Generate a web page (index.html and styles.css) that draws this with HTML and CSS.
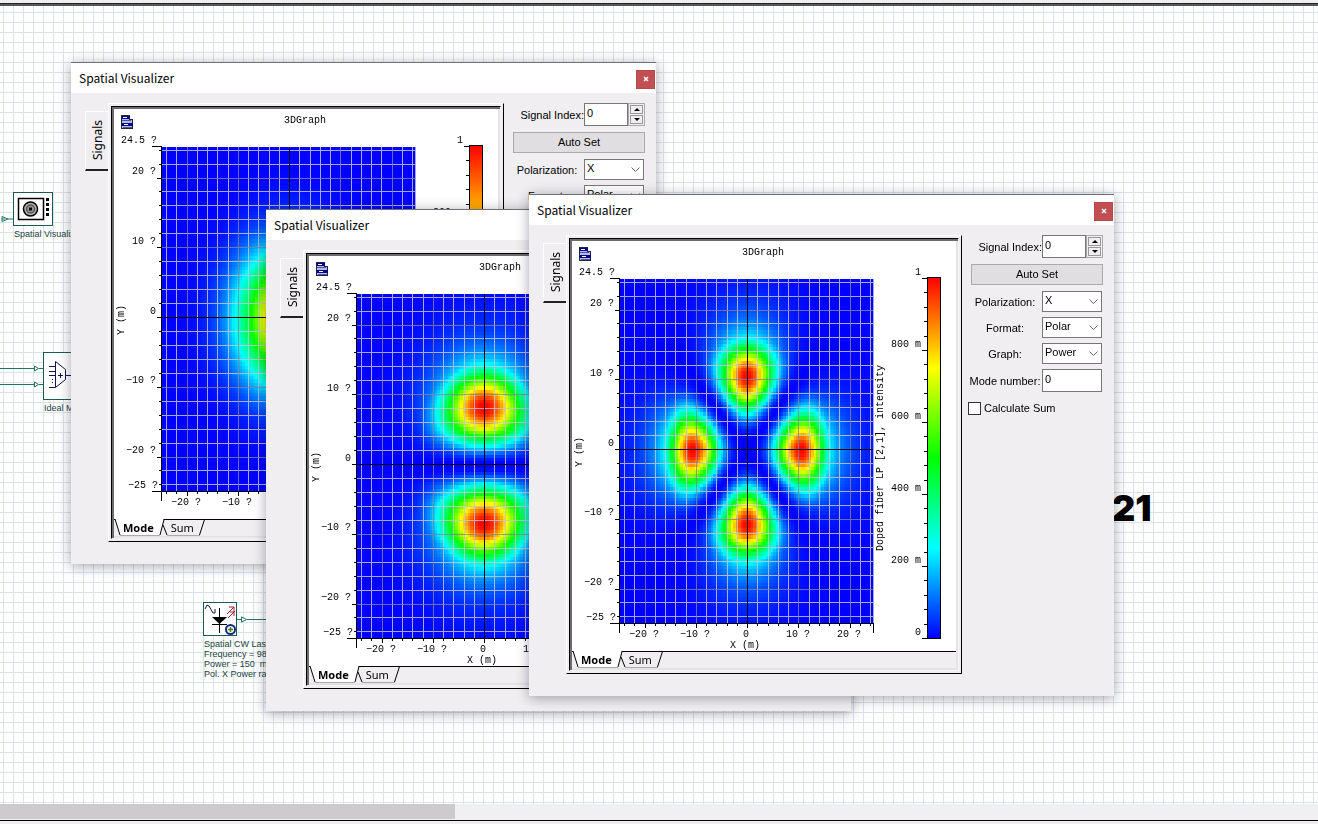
FILE: index.html
```html
<!DOCTYPE html>
<html lang="en">
<head>
<meta charset="utf-8">
<title>Spatial Visualizer</title>
<link rel="stylesheet" href="styles.css">
</head>
<body>
<main class="workspace">
  <div class="top-rule"></div>
  <section class="sheet">
    <svg class="schematic" xmlns="http://www.w3.org/2000/svg" aria-label="Schematic">
      <g class="wire">
        <path d="M2 215h3M2 212.500v5l6-2.500zM8 215h5" />
        <path d="M0 364.500h35M0 380.500h35M34.500 362v5l4-2.500zM34.500 378v5l4-2.500zM39 364.500h4M39 380.500h4" />
        <path d="M237 615.500h4M241.500 613v5l5-2.500zM247 615.500h40" />
      </g>
      <g class="node">
        <rect x="13.500" y="188.500" width="39" height="33" />
        <rect x="43.500" y="348.500" width="47" height="47" />
        <rect x="203.500" y="598.500" width="33" height="33" />
      </g>
      <g fill="none" stroke="#000" stroke-width="1.500">
        <rect x="18.500" y="194.500" width="25" height="21" />
        <circle cx="30.500" cy="205" r="7" fill="#b0b0b0" />
        <circle cx="30.500" cy="205" r="4" fill="#999" stroke="#555" />
      </g>
      <path d="M29 203.500h3v3h-3zM46 194h3v3h-3zM46 199h3v3h-3zM46 204h3v3h-3zM46 209h3v3h-3z" />
      <path class="ink" d="M49 362.500h6M49 367.500h6M49 371.500h6M49 383.500h6M52.500 375v1M52.500 378v1M55.500 357.500v26l10-8v-10zM66 371.500h8M58 371.500h5M60.500 369v5" />
      <path class="ink" d="M205 605l2-4 2 1 4 7 2 0 0-4" />
      <path d="M219.500 604v25M212 620.500h15" fill="none" stroke="#000" />
      <path d="M212 613h15l-7.500 7z" />
      <path d="M227 610l7-7M229 603h5v5M228 614l7-7M230 608h4v4" fill="none" stroke="#a02030" />
      <circle cx="230.500" cy="625.500" r="4.500" fill="#fff" stroke="#102a78" stroke-width="2" />
      <path d="M230.500 623v5M228 625.500h5" stroke="#4a7a20" stroke-width="1.500" />
      <g class="node-label">
        <text x="14" y="233">Spatial Visualizer</text>
        <text x="44" y="407">Ideal Mux</text>
        <text x="204" y="643">Spatial CW Laser</text>
        <text x="204" y="653">Frequency = 980 nm</text>
        <text x="204" y="663" xml:space="preserve">Power = 150  mW</text>
        <text x="204" y="673">Pol. X Power ratio</text>
      </g>
      <text class="caption" x="1112" y="517">21</text>
    </svg>
  </section>
  <div class="scrollbar"><div class="thumb"></div></div>
</main>

<template id="visualizer">
  <header class="titlebar">
    <h2>Spatial Visualizer</h2>
    <button class="close" type="button" aria-label="Close"><svg viewBox="0 0 6 6" width="6" height="6"><path d="M1 1l4 4M5 1L1 5" /></svg></button>
  </header>
  <div class="body">
    <button class="side-tab" type="button">Signals</button>
    <div class="frame">
      <div class="view">
        <div class="chart">
          <canvas width="101" height="101"></canvas>
          <svg class="axes" viewBox="0 0 384 410" width="384" height="410" xmlns="http://www.w3.org/2000/svg">
            <g class="doc-icon">
              <path fill="#b8b8e8" stroke="#222244" d="M7.500 6.500h8v4h3v9h-11z" />
              <path fill="#000090" d="M8 7h8v3H8zM8 14h11v3H8z" />
              <path fill="#fff" d="M9 8h4v1H9zM10 15h4v1h-4z" />
              <path fill="#555588" d="M8 11h9v1H8zM9 18h9v1H9z" />
            </g>
            <defs>
              <linearGradient id="scale" x1="0" y1="0" x2="0" y2="1">
                <stop offset="0" stop-color="#f00" /><stop offset=".25" stop-color="#ff0" />
                <stop offset=".5" stop-color="#0f0" /><stop offset=".75" stop-color="#0ff" />
                <stop offset="1" stop-color="#00f" />
              </linearGradient>
            </defs>
            <path class="minor" /><path class="major" /><path class="center" /><path class="ticks" />
            <rect x="355.500" y="36.500" width="13" height="361" fill="url(#scale)" stroke="#000" />
            <text x="170" y="14">3DGraph</text>
            <g text-anchor="end">
              <text x="43" y="34">24.5 ?</text><text x="42" y="65">20 ?</text>
              <text x="42" y="135">10 ?</text><text x="42" y="205">0</text>
              <text x="42" y="274">−10 ?</text><text x="42" y="344">−20 ?</text>
              <text x="44" y="379">−25 ?</text>
              <text x="349" y="34">1</text><text x="349" y="106">800 m</text>
              <text x="349" y="178">600 m</text><text x="349" y="250">400 m</text>
              <text x="349" y="322">200 m</text><text x="349" y="394">0</text>
            </g>
            <text x="57" y="396">−20 ?</text><text x="108" y="396">−10 ?</text>
            <text x="171" y="396">0</text><text x="214" y="396">10 ?</text><text x="265" y="396">20 ?</text>
            <text x="158" y="407">X (m)</text>
            <text transform="translate(10 226) rotate(-90)">Y (m)</text>
            <text class="quantity" transform="translate(311 310) rotate(-90)"></text>
          </svg>
        </div>
        <div class="tabs">
          <svg class="tab-lines" viewBox="0 0 384 17" width="384" height="17"><path class="tab-active" d="M1 0l5 16h40l4-16z" /><path d="M1 0l5 16M46 16l4-15.500M49.500 .5H384M0 .5h1M49 6l4 10M85.500 16l5-15.500" /><path class="tab-edge" d="M6 16.500h40M53 16.500h33" /></svg>
          <button class="sheet-tab active" type="button">Mode</button>
          <button class="sheet-tab" type="button">Sum</button>
        </div>
      </div>
    </div>
    <form class="panel">
      <label class="field signal"><span>Signal Index:</span><input type="text" value="0"></label>
      <div class="spinner">
        <button type="button" aria-label="Increase"><svg viewBox="0 0 6 3" width="6" height="3"><path d="M3 0l3 3H0z" /></svg></button>
        <button type="button" aria-label="Decrease"><svg viewBox="0 0 6 3" width="6" height="3"><path d="M0 0h6L3 3z" /></svg></button>
      </div>
      <button class="auto-set" type="button">Auto Set</button>
      <label class="field"><span>Polarization:</span><select><option>X</option></select><svg class="chevron" viewBox="0 0 9 5" width="9" height="5"><path d="M.5 .5l4 4 4-4" /></svg></label>
      <label class="field"><span>Format:</span><select><option>Polar</option></select><svg class="chevron" viewBox="0 0 9 5" width="9" height="5"><path d="M.5 .5l4 4 4-4" /></svg></label>
      <label class="field"><span>Graph:</span><select><option>Power</option></select><svg class="chevron" viewBox="0 0 9 5" width="9" height="5"><path d="M.5 .5l4 4 4-4" /></svg></label>
      <label class="field tall"><span>Mode number:</span><input type="text" value="0"></label>
      <label class="check"><input type="checkbox">Calculate Sum</label>
    </form>
  </div>
</template>

<section class="window first" data-order="0"></section>
<section class="window second" data-order="1"></section>
<section class="window third" data-order="2"></section>
<script src="app.js"></script>
</body>
</html>
```

FILE: styles.css
```css
* { box-sizing: border-box; }

body {
  margin: 0;
  height: 100vh;
  overflow: hidden;
  position: relative;
  font: 11px/13px "Liberation Sans", Arial, sans-serif;
  color: #000;
  background: #f0eef0;
}

button, input, select { font: inherit; color: inherit; margin: 0; border-radius: 0; }

.workspace { display: flex; flex-direction: column; height: 100%; padding: 3px 0 3px; }
.top-rule { flex: none; height: 1px; background: #222; }
.sheet {
  flex: 1;
  min-height: 0;
  background-color: #fdfefe;
  background-image:
    linear-gradient(90deg, #dfe1e9 1px, transparent 1px),
    linear-gradient(#dfe1e9 1px, transparent 1px);
  background-size: 10px 10px;
  background-position: 3px 6px;
  border-top: 2px solid #55555a;
}
.schematic { display: block; width: 100%; height: 100%; margin-top: -2px; }
.wire { fill: #fff; stroke: #23745f; }
.node { fill: #fff; stroke: #1f5a50; }
.ink { fill: none; stroke: #14144a; }
.node-label { font-size: 9px; fill: #23453f; }
.caption { font: 900 36px Inter, "Liberation Sans", sans-serif; }
.scrollbar { flex: none; height: 17px; background: #f0eff1; border-bottom: 1px solid #000; }
.thumb { width: 34.5%; height: 15px; background: #cdcbcd; }

.window {
  position: absolute;
  background: #f0eef0;
  border-top: 1px solid #707074;
  box-shadow: 0 2px 12px rgba(20, 20, 40, .38);
}
.first { left: 71px; top: 62px; }
.second { left: 266px; top: 209px; }
.third { left: 529px; top: 194px; }

.titlebar {
  display: flex;
  justify-content: space-between;
  align-items: center;
  height: 30px;
  padding: 2px 1px 0 8px;
  background: #fff;
}
.titlebar h2 { margin: 0; font: 12px/18px "Noto Sans CJK SC", "Noto Sans", sans-serif; padding-bottom: 3px; }
.close { display: grid; place-items: center; width: 19px; height: 19px; padding: 0; border: 1px solid #b54848; background: #c24f52; }
.close path { fill: none; stroke: #fff; stroke-width: 1.5; }

.body { display: flex; align-items: flex-start; padding: 10px 11px 22px 14px; }
.side-tab {
  width: 24px;
  height: 60px;
  margin-top: 8px;
  padding: 0;
  border: solid;
  border-width: 1px 0 2px 1px;
  border-color: #fff #fff #222 #fff;
  background: none;
  font: 12px/20px "Noto Sans", sans-serif;
  writing-mode: sideways-lr;
}
.frame {
  margin-left: -1px;
  padding: 2px;
  border: 1px solid;
  border-color: #fff #000 #000 #fff;
}
.view {
  padding: 2px;
  border: 1px solid;
  border-color: #000 #f4f4f4 #f4f4f4 #000;
  background: #fff;
  box-shadow: inset 2px 2px #6c6c6c, inset -2px -2px #e4e4e4;
}
.chart { display: grid; background: #fff; }
.chart > * { grid-area: 1 / 1; }
.chart canvas { width: 254px; height: 345px; margin: 38px 0 0 48px; image-rendering: pixelated; }
.axes { display: block; font: 10px "Liberation Mono", monospace; position: relative; }
.axes path { shape-rendering: crispEdges; }
.minor, .major, .center, .ticks { fill: none; }
.minor { stroke: #c4c4dc; stroke-opacity: .85; }
.major { stroke: #85859c; stroke-opacity: .8; }
.center, .ticks { stroke: #000; }
.tabs { display: flex; position: relative; height: 17px; padding-left: 9px; gap: 17px; background: #f0eef0; }
.tab-lines { position: absolute; left: 0; top: 0; fill: none; stroke: #000; }
.tab-lines .tab-active { fill: #fff; stroke: none; }
.tab-lines .tab-edge { stroke: #aaa; }
.sheet-tab { position: relative; padding: 0; border: 0; background: none; font: 11px/17px "Noto Sans", sans-serif; }
.sheet-tab.active { font-weight: 700; }

.panel {
  display: grid;
  grid-template-columns: 74px 44px 17px;
  row-gap: 5px;
  margin-left: 6px;
}
.field { display: grid; grid-column: 1 / -1; grid-template-columns: 74px 60px; align-items: center; min-height: 21px; }
.field span { text-align: center; white-space: nowrap; padding-top: 1px; }
.field input, .field select {
  grid-area: 1 / 2;
  width: 100%;
  height: 21px;
  padding: 0 0 2px 2px;
  border: 1px solid #777;
  background: #fff;
  appearance: none;
}
.field.signal { grid-column: 1 / 3; grid-template-columns: 74px 44px; }
.field.signal span { text-align: right; }
.field.signal input, .field.tall input { height: 23px; padding-bottom: 4px; }
.chevron { grid-area: 1 / 2; justify-self: end; margin-right: 4px; fill: none; stroke: #666; pointer-events: none; }
.spinner { display: grid; gap: 1px; padding: 1px; border: 1px solid #aaa; }
.spinner button { display: grid; place-items: center; padding: 0; border: 1px solid #999; background: #f0eef0; }
.auto-set { grid-column: 1 / -1; height: 21px; margin: 1px 0 1px 3px; padding: 0; border: 1px solid #aaa; background: #e0dee0; }
.check { grid-column: 1 / -1; display: flex; align-items: center; gap: 3px; margin-top: 5px; }
.check input { appearance: none; width: 13px; height: 13px; border: 1px solid #333; background: #fff; }
```

FILE: app.js
```js
// Radial part of a mode: power-law rise to the peak, Gaussian fall, exponential cladding tail.
function radial(r, peak, order, width, edge) {
  if (r <= peak) {
    const q = r * r / (peak * peak);
    return Math.pow(q, order) * Math.exp(order * (1 - q));
  }
  const d = Math.min(r - peak, edge);
  const tail = Math.max(0, r - peak - edge);
  return Math.exp(-d * d / (width * width) - tail / 3.5);
}

// Normalised intensity of each fibre mode at (x, y) in micrometres.
const modes = [
  { name: "Doped fiber LP [0,1], intensity", f: (x, y) => Math.exp(-0.0122 * (x * x + y * y)) },
  { name: "Doped fiber LP [1,1], intensity", f: (x, y) => {
    const r2 = x * x + y * y || 1e-9;
    return radial(Math.sqrt(r2), 8.4, 1, 5.3, 6.3) * y * y / r2;
  } },
  { name: "Doped fiber LP [2,1], intensity", f: (x, y) => {
    const r2 = x * x + y * y || 1e-9;
    const angular = (x * x - y * y) / r2;
    return radial(Math.sqrt(r2), 10.7, 2, 4.7, 5.5) * angular * angular;
  } }
];

const template = document.getElementById("visualizer");

function colour(v) {
  const t = Math.max(0, Math.min(1, v)) * 4;
  if (t < 1) return [0, 255 * t, 255];
  if (t < 2) return [0, 255, 255 * (2 - t)];
  if (t < 3) return [255 * (t - 2), 255, 0];
  return [255, 255 * (4 - t), 0];
}

function drawField(canvas, f) {
  const ctx = canvas.getContext("2d");
  const n = canvas.width;
  const image = ctx.createImageData(n, n);
  for (let j = 0; j < n; j++) {
    for (let i = 0; i < n; i++) {
      const x = (i / (n - 1) - 0.5) * 49.5;
      const y = 24.5 - j / (n - 1) * 49.3;
      const [r, g, b] = colour(f(x, y));
      image.data.set([r, g, b, 255], (j * n + i) * 4);
    }
  }
  ctx.putImageData(image, 0, 0);
}

function drawAxes(svg) {
  const left = 47.5, right = 301.5, top = 37.5, bottom = 382.5;
  const grid = { minor: "", major: "", center: "" };
  let ticks = `M38 ${top}H48M38 ${bottom}H${right}M${left} ${top}V392M${right} ${bottom}v9`;
  for (let k = -12; k <= 12; k++) {
    const x = Math.round(175 + 10.25 * k) + 0.5;
    const y = Math.round(208 + 13.95 * k) + 0.5;
    const kind = k === 0 ? "center" : k % 5 === 0 ? "major" : "minor";
    grid[kind] += `M${x} 38V382M48 ${y}H301`;
    const size = k % 5 === 0 ? 5 : 3;
    ticks += `M${x} 382v${size}M48 ${y}h-${size}`;
  }
  grid.minor += `M${right} 38V382`;
  for (let k = 0; k <= 25; k++) {
    ticks += `M355 ${Math.round(37 + 14.4 * k) + 0.5}h-${k % 5 === 0 ? 5 : 3}`;
  }
  for (const kind in grid) svg.querySelector("." + kind).setAttribute("d", grid[kind]);
  svg.querySelector(".ticks").setAttribute("d", ticks);
}

document.querySelectorAll(".window").forEach((win) => {
  const mode = modes[Number(win.dataset.order)];
  win.append(template.content.cloneNode(true));
  drawField(win.querySelector("canvas"), mode.f);
  drawAxes(win.querySelector(".axes"));
  win.querySelector(".quantity").textContent = mode.name;
});
```
